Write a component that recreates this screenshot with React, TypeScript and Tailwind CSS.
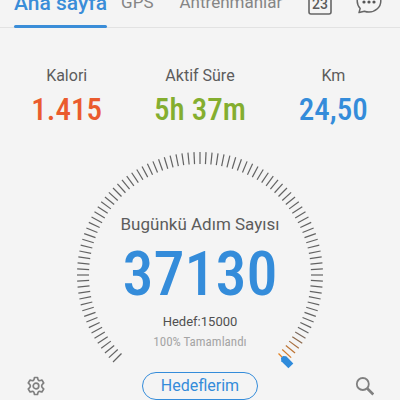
// icons
import { ReactNode } from "react";

interface IStatProps {
    label: string;
    value: string;
    className: string;
}

interface ITabProps {
    children: ReactNode;
    className: string;
    active?: boolean;
}

// dial geometry
const CENTER = 125;
const OUTER = 123;
const INNER = 111;
const TICKS = 96;
const SWEEP = 270;

// colors of the last ticks, right before the pointer
const tailColors = ["#7a6a5f", "#8d6a4c", "#a86f3f", "#bd7434", "#d17a2a", "#e38324"];

const CalendarIcon = () => (
    <svg width="24" height="28" viewBox="0 0 24 28" fill="none" stroke="#666" strokeWidth="1.6">
        <rect x="1" y="3" width="22" height="24" rx="2" />
        <text x="12" y="22" textAnchor="middle" fill="#5c5c5c" stroke="none" fontSize="14" fontWeight="500" fontFamily="Roboto, sans-serif">
            23
        </text>
    </svg>
);

const ChatIcon = () => (
    <svg width="26" height="28" viewBox="0 0 26 28" fill="none" stroke="#666" strokeWidth="1.5" strokeLinejoin="round">
        <path d="M13 3C6.500 3 1.200 7.900 1.200 14c0 3 1.200 5.500 3 7.400L3 25.600l5.400-1.400c1.400.5 3 .8 4.600.8 6.500 0 11.800-4.900 11.800-11S19.500 3 13 3z" />
        <g fill="#555" stroke="none">
            <circle cx="8" cy="15" r="1.600" />
            <circle cx="13" cy="15" r="1.600" />
            <circle cx="18" cy="15" r="1.600" />
        </g>
    </svg>
);

const GearIcon = () => (
    <svg width="20" height="20" viewBox="0 0 20 20" fill="none" stroke="#808080" strokeWidth="1.7" strokeLinejoin="round">
        <path d="M8.500 1.500h3q.4 2.600 1.200 3 .9.500 3.200-.5l1.800 3q-2.100 1.700-2.100 3t2.100 3l-1.800 3q-2.300-1-3.200-.5-.8.4-1.200 3h-3q-.4-2.600-1.200-3-.9-.5-3.200.5l-1.800-3q2.100-1.700 2.100-3t-2.100-3l1.800-3q2.300 1 3.200.5.8-.4 1.200-3z" />
        <circle cx="10" cy="10" r="2.800" />
    </svg>
);

const SearchIcon = () => (
    <svg width="20" height="20" viewBox="0 0 20 20" fill="none" stroke="#808080">
        <circle cx="8.800" cy="8" r="6" strokeWidth="1.800" />
        <path d="M13.300 12.500l6 6" strokeWidth="2.600" />
    </svg>
);

const Tab = ({ children, className, active }: ITabProps) => (
    <button
        role="tab"
        aria-selected={!!active}
        className={`flex whitespace-nowrap ${className}`}
    >
        {children}
    </button>
);

const Stat = ({ label, value, className }: IStatProps) => (
    <div className="flex flex-col items-center">
        <p className="text-base leading-6 text-[#5c5c5c]">{label}</p>
        <p className={`font-['Roboto_Condensed',Roboto,sans-serif] text-[31px] leading-11 font-medium whitespace-nowrap ${className}`}>
            {value}
        </p>
    </div>
);

const Dial = () => (
    <svg viewBox="0 0 250 250" className="col-start-1 row-start-1 size-[250px] overflow-visible" aria-hidden="true">
        {Array.from({ length: TICKS + 1 }, (_, i) => {
            const tail = i - (TICKS + 1 - tailColors.length);
            return (
                <line
                    key={i}
                    x1={CENTER}
                    x2={CENTER}
                    y1={CENTER - OUTER}
                    y2={CENTER - INNER}
                    stroke={tail >= 0 ? tailColors[tail] : "#636363"}
                    strokeWidth="1.2"
                    transform={`rotate(${i * (SWEEP / TICKS) - SWEEP / 2} ${CENTER} ${CENTER})`}
                />
            );
        })}
        {/* Pointer */}
        <path
            d="M121.500 6.500L123.500 9h3L128.500 6.500V-3.500h-7z"
            fill="#2f8bdb"
            transform={`rotate(135 ${CENTER} ${CENTER})`}
        />
    </svg>
);

const App = () => {
    return (
        <main className="min-h-screen overflow-hidden bg-[#f4f4f4] font-[Roboto,'Noto_Sans',sans-serif]">
            {/* Tabs */}
            <header className="flex h-7 items-end justify-between border-b border-[#e2e2e2] pr-[18px] pl-3.5">
                <div role="tablist" className="-mb-px flex items-end">
                    <Tab active className="flex-col items-center gap-2.5 text-[21px] leading-6 font-medium text-[#3a8dd8]">
                        <span>Ana sayfa</span>
                        <span className="h-[3px] w-full rounded-full bg-[#3a8dd8]" />
                    </Tab>
                    <Tab className="ml-3.5 pb-4 text-[17px] leading-5 text-[#858585]">GPS</Tab>
                    <Tab className="ml-[26px] pb-4 text-[17px] leading-5 text-[#858585]">Antrenmanlar</Tab>
                </div>
                <div className="flex gap-6 pb-3">
                    <button aria-label="Takvim"><CalendarIcon /></button>
                    <button aria-label="Mesajlar"><ChatIcon /></button>
                </div>
            </header>

            {/* Stats */}
            <section className="grid grid-cols-3 pt-9">
                <Stat label="Kalori" value="1.415" className="text-[#ea5b2d]" />
                <Stat label="Aktif Süre" value="5h 37m" className="text-[#84ae2f]" />
                <Stat label="Km" value="24,50" className="text-[#348cda]" />
            </section>

            {/* Steps */}
            <section className="mt-[18px] grid justify-center">
                <Dial />
                <div className="col-start-1 row-start-1 flex flex-col items-center pt-[62px]">
                    <h1 className="text-[17px] leading-6 text-[#5c5c5c]">Bugünkü Adım Sayısı</h1>
                    <p className="font-['Roboto_Condensed',Roboto,sans-serif] text-[62px] leading-[76px] font-medium text-[#348cda]">37130</p>
                    <p className="text-[13px] leading-5 text-[#505050]">Hedef:15000</p>
                    <p className="font-['Roboto_Condensed',Roboto,sans-serif] text-[13px] leading-5 text-[#a5a5a5]">100% Tamamlandı</p>
                </div>
            </section>

            {/* Bottom bar */}
            <footer className="-mt-7 flex items-center justify-between px-[26px]">
                <button aria-label="Ayarlar"><GearIcon /></button>
                <button className="h-7 w-[116px] rounded-full border border-[#348cda] text-base leading-5 text-[#348cda]">
                    Hedeflerim
                </button>
                <button aria-label="Ara"><SearchIcon /></button>
            </footer>
        </main>
    );
};

export default App;
